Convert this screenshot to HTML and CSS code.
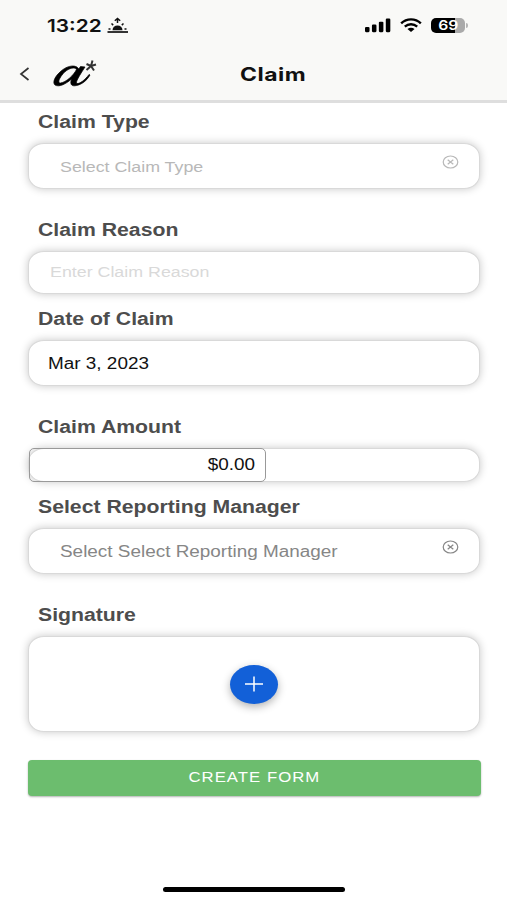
FILE: index.html
```
<!DOCTYPE html>
<html lang="en">
<head>
<meta charset="utf-8">
<title>Claim</title>
<link rel="stylesheet" href="styles.css">
</head>
<body>
<header class="top">
  <div class="status">
    <span class="time"><span class="wide">13:22</span></span>
    <svg class="sunrise" width="22" height="17" viewBox="0 0 22 17">
      <path d="M.5 15h20.500" stroke="#111" stroke-width="1.700"/>
      <path d="M5.500 13.200a5 4.800 0 0 1 10 0z" fill="#111"/>
      <path d="M10.500 6V1.500M7.800 3.800l2.700-2.400 2.700 2.400M4.500 6.500l1.700 1.600M16.500 6.500l-1.700 1.600M1.500 12h2M17.500 12h2" stroke="#111" stroke-width="1.500" fill="none"/>
    </svg>
    <span class="spacer"></span>
    <svg class="signal" width="27" height="15" viewBox="0 0 27 15" fill="#000">
      <rect x="0" y="9" width="4.700" height="5.500" rx="1.200"/><rect x="7.200" y="6.500" width="4.700" height="8" rx="1.200"/><rect x="14.400" y="3.500" width="4.700" height="11" rx="1.200"/><rect x="21.600" y="0.300" width="4.700" height="14.200" rx="1.200"/>
    </svg>
    <svg class="wifi" width="23" height="15" viewBox="0 0 23 15">
      <path d="M1.200 5.200C7 -.3 16 -.3 21.800 5.200M5 8.700c3.800-3.300 9.200-3.300 13 0" fill="none" stroke="#000" stroke-width="2.500"/>
      <path d="M7.800 11.200c2.200-1.700 5.200-1.700 7.400 0L11.500 14.200z" fill="#000"/>
    </svg>
    <span class="battery"><span class="level"><span class="wide">69</span></span><span class="tip"></span></span>
  </div>
  <nav class="bar">
    <svg class="back" width="11" height="14" viewBox="0 0 11 14"><path d="M9.500 1L2 7l7.500 6" fill="none" stroke="#333" stroke-width="1.700"/></svg>
    <svg class="logo" width="45" height="31" viewBox="0 0 45 31">
      <path fill="#000" stroke="#000" stroke-width=".7" fill-rule="evenodd" d="M24.500 10.500C21 7.500 13 9 7 15C1 20.500-.5 26 2 28C6 30.500 13 27 18.500 22C17 26.500 18 29 21.500 28.800C27 28.500 33.500 24.500 37 18L36 17.500C32 23 26.500 27 24 26.500C22 25.500 26.500 18.500 32 10L27.500 9.500L25.800 12ZM23.500 12.500C20.500 18.500 13 25.200 7.500 26C4 26 6.500 20 12 14.700C17 10.700 21.500 10 23.500 12.500Z"/>
      <path d="M39.500 3.500L38 9l5-1.500M38 9l3 4.500M38 9l-4.500 4M38 9l-4.500-2" fill="none" stroke="#333" stroke-width="2"/>
    </svg>
    <h1 class="title"><span class="wide">Claim</span></h1>
  </nav>
</header>
<main class="form">
  <section class="field">
    <label class="label"><span class="wide">Claim Type</span></label>
    <div class="box select pale"><span class="wide">Select Claim Type</span>
      <svg class="clear" width="17" height="14" viewBox="0 0 17 14"><ellipse cx="8.500" cy="7" rx="7.300" ry="6"/><path d="M5.700 4.700l5.600 4.600M11.300 4.700L5.700 9.300"/></svg></div>
  </section>
  <section class="field">
    <label class="label"><span class="wide">Claim Reason</span></label>
    <div class="box input"><span class="wide">Enter Claim Reason</span></div>
  </section>
  <section class="field">
    <label class="label"><span class="wide">Date of Claim</span></label>
    <div class="box date"><span class="wide">Mar 3, 2023</span></div>
  </section>
  <section class="field">
    <label class="label"><span class="wide">Claim Amount</span></label>
    <div class="box amount"><div class="money"><span class="wide">$0.00</span></div></div>
  </section>
  <section class="field">
    <label class="label"><span class="wide">Select Reporting Manager</span></label>
    <div class="box select"><span class="wide">Select Select Reporting Manager</span>
      <svg class="clear" width="17" height="14" viewBox="0 0 17 14"><ellipse cx="8.500" cy="7" rx="7.300" ry="6"/><path d="M5.700 4.700l5.600 4.600M11.300 4.700L5.700 9.300"/></svg></div>
  </section>
  <section class="field">
    <label class="label"><span class="wide">Signature</span></label>
    <div class="box sign"><button class="add" aria-label="Add"><svg width="20" height="16" viewBox="0 0 20 16"><path d="M1 8h18M10 .5v15" stroke="#fff" stroke-width="1.500"/></svg></button></div>
  </section>
  <button class="create"><span class="wide">CREATE FORM</span></button>
</main>
<footer class="home"></footer>
</body>
</html>
```
FILE: styles.css
```
* { box-sizing: border-box; }
body {
  margin: 0;
  width: 507px;
  height: 900px;
  display: flex;
  flex-direction: column;
  background: #fff;
  font-family: "Liberation Sans", Arial, sans-serif;
  overflow: hidden;
}
button { border: 0; padding: 0; font-family: inherit; }
.wide {
  display: inline-block;
  transform: scaleX(1.213);
  transform-origin: left center;
  white-space: nowrap;
}
.top {
  height: 103px;
  flex: none;
  background: #f9f9f7;
  border-bottom: 3px solid #dedede;
}
.status {
  height: 50px;
  padding: 1px 39px 0 47px;
  display: flex;
  align-items: center;
}
.time {
  width: 60px;
  font: 600 17.5px/24px Inter, sans-serif;
  color: #111;
}
.time .wide { transform: scaleX(1.19); }
.spacer { flex: 1; }
.signal { width: 26px; margin-right: 9px; }
.wifi { width: 22px; margin-right: 9px; }
.battery { display: flex; align-items: center; gap: 1px; }
.level {
  width: 34px;
  height: 15px;
  border-radius: 5px;
  background: linear-gradient(90deg, #000 70%, #aaa 70%);
  color: #fff;
  font: 600 13px/15px Inter, sans-serif;
  text-align: center;
}
.level .wide { transform-origin: center; }
.tip { width: 2px; height: 5px; border-radius: 0 3px 3px 0; background: #b5b5b5; }
.bar { height: 50px; display: flex; align-items: flex-start; padding-left: 19px; }
.back { margin-top: 17px; }
.logo { margin: 7px 0 0 23px; }
.title {
  margin: 12px 0 0 142px;
  font: 700 18.5px/24px Inter, sans-serif;
  letter-spacing: .4px;
  color: #111;
}
.title .wide { transform: scaleX(1.24); }
.form { flex: 1; padding: 6px 27px 0 28px; }
.field { margin-bottom: 28px; }
.field:nth-child(2) { margin-bottom: 12px; }
.field:nth-child(4) { margin-bottom: 12px; }
.label {
  display: block;
  height: 34px;
  padding: 1px 0 0 9.5px;
  font-weight: 700;
  font-size: 17.5px;
  line-height: 24px;
  color: #4d4d4d;
}
.box {
  height: 46px;
  display: flex;
  align-items: center;
  border: 1px solid #d9d9d9;
  border-radius: 16px / 14px;
  background: #fff;
  box-shadow: 0 0 9px rgba(0, 0, 0, .22);
  font-size: 15.6px;
}
.select { padding: 1px 20px 0 31px; justify-content: space-between; color: #868686; }
.pale { padding-top: 2px; color: #b8b8b8; font-size: 14.7px; }
.clear { margin-bottom: 10px; fill: none; stroke: currentColor; stroke-width: 1.2; }
.input { height: 43px; padding: 0 0 1px 21px; color: #d9d9d9; font-size: 14.7px; }
.date { padding: 1px 0 0 19px; color: #111; }
.amount { height: 34px; }
.money {
  width: 237px;
  height: 34px;
  margin: -1px 0;
  padding-right: 10px;
  border: 1px solid #999;
  border-radius: 5px;
  line-height: 31px;
  text-align: right;
  color: #111;
}
.money .wide { transform-origin: right center; }
.sign { height: 96px; justify-content: center; }
.add {
  width: 48px;
  height: 39px;
  border-radius: 50%;
  background: #1260d8;
  display: flex;
  align-items: center;
  justify-content: center;
  box-shadow: 0 3px 8px rgba(0, 0, 0, .3);
}
.create {
  display: block;
  width: 453px;
  height: 36px;
  margin-left: -.5px;
  padding-bottom: 1px;
  border-radius: 4px;
  background: #6cbd6e;
  color: #fff;
  font-size: 13.8px;
  letter-spacing: .85px;
  box-shadow: 0 1px 2px rgba(0, 0, 0, .3);
}
.create .wide { transform-origin: center; }
.home {
  width: 182px;
  height: 5px;
  margin: 0 auto 8px;
  border-radius: 3px;
  background: #000;
}
```
